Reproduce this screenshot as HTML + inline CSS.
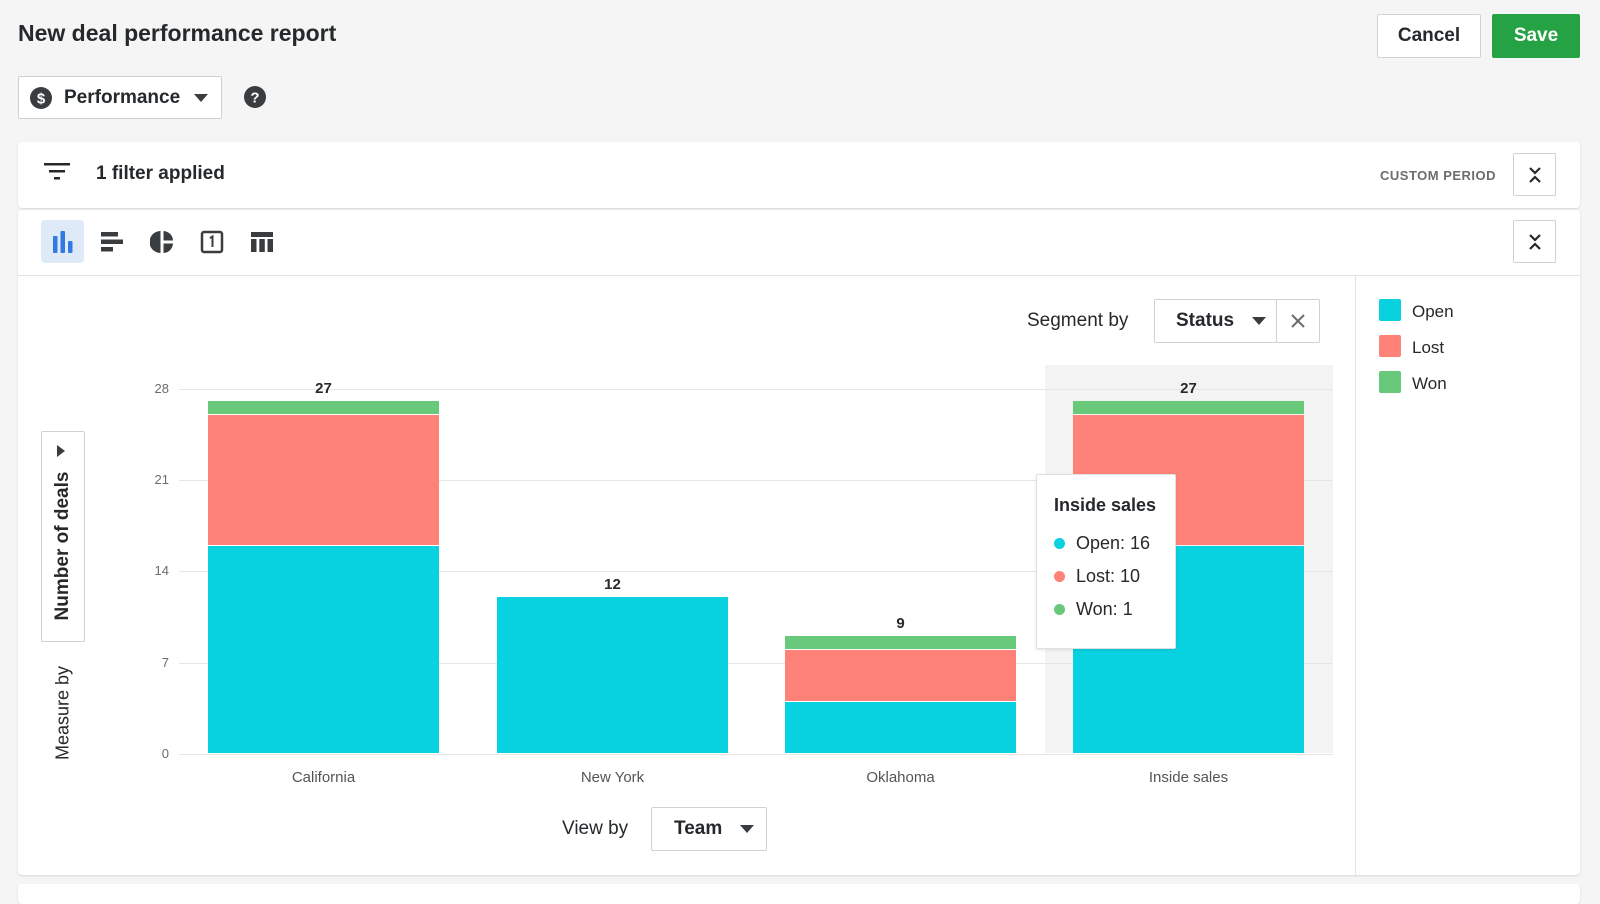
<!DOCTYPE html>
<html><head><meta charset="utf-8"><style>
*{box-sizing:border-box;margin:0;padding:0}
body{width:1600px;height:891px;background:#f5f5f5;font-family:"Liberation Sans",sans-serif;color:#26292c;position:relative;overflow:hidden}
.a{position:absolute}
.btn{position:absolute;background:#fff;border:1px solid #d0d1d3;border-radius:2px;display:flex;align-items:center;justify-content:center}
.panel{position:absolute;background:#fff;border-radius:4px;box-shadow:0 1px 2px rgba(0,0,0,.12)}
.gl{position:absolute;left:179px;width:1154px;height:1px;background:#e6e6e6}
.yl{position:absolute;width:30px;text-align:right;left:139px;font-size:13px;color:#6a6c6f}
.xl{position:absolute;top:769px;font-size:15px;color:#555;text-align:center;width:231px}
.cy{background:#08d1e0}.rd{background:#ff8279}.gr{background:#68c97b}
.vl{position:absolute;font-size:15px;font-weight:bold;text-align:center;width:231px}
</style></head><body>
<div class="a" style="left:18px;top:20px;font-size:23px;font-weight:bold;color:#26292c">New deal performance report</div>
<div class="btn" style="left:1377px;top:14px;width:104px;height:44px;font-size:19px;font-weight:bold">Cancel</div>
<div class="btn" style="left:1492px;top:14px;width:88px;height:44px;font-size:19px;font-weight:bold;color:#fff;background:#25a244;border-color:#25a244">Save</div>
<div class="btn" style="left:18px;top:76px;width:204px;height:43px;justify-content:flex-start;padding-left:11px;font-size:19px;font-weight:bold">
<svg width="22" height="22" viewBox="0 0 22 22"><circle cx="11" cy="11" r="11" fill="#3a3d40"/><text x="11" y="16.5" font-size="15" font-weight="bold" fill="#fff" text-anchor="middle" font-family="Liberation Sans">$</text></svg>
<span style="margin-left:12px">Performance</span>
<svg style="margin-left:14px" width="14" height="8"><path d="M0 0h14L7 8z" fill="#3a3d40"/></svg></div>
<svg class="a" style="left:244px;top:86px" width="22" height="22" viewBox="0 0 22 22"><circle cx="11" cy="11" r="11" fill="#3a3d40"/><text x="11" y="16.5" font-size="15" font-weight="bold" fill="#fff" text-anchor="middle" font-family="Liberation Sans">?</text></svg>

<div class="panel" style="left:18px;top:142px;width:1562px;height:66px"></div>
<svg class="a" style="left:44px;top:163px" width="26" height="18"><rect x="0" y="0" width="26" height="2.5" fill="#26292c"/><rect x="5" y="7" width="16" height="2.5" fill="#26292c"/><rect x="10" y="14" width="6" height="2.5" fill="#26292c"/></svg>
<div class="a" style="left:96px;top:163px;font-size:19px;font-weight:bold">1 filter applied</div>
<div class="a" style="left:1380px;top:168px;font-size:13px;font-weight:bold;color:#6a6c6f;letter-spacing:.5px">CUSTOM PERIOD</div>
<div class="btn" style="left:1513px;top:153px;width:43px;height:43px"><svg width="14" height="18"><path d="M2 2l5 5 5-5M2 16l5-5 5 5" stroke="#26292c" stroke-width="2.2" fill="none"/></svg></div>

<div class="panel" style="left:18px;top:210px;width:1562px;height:665px"></div>
<div class="a" style="left:18px;top:275px;width:1562px;height:1px;background:#e4e4e4"></div>
<div class="a" style="left:1355px;top:276px;width:1px;height:599px;background:#e4e4e4"></div>
<div class="btn" style="left:1513px;top:220px;width:43px;height:43px"><svg width="14" height="18"><path d="M2 2l5 5 5-5M2 16l5-5 5 5" stroke="#26292c" stroke-width="2.2" fill="none"/></svg></div>
<div class="a" style="left:41px;top:220px;width:43px;height:43px;background:#dfeaf9;border-radius:4px"></div>
<svg class="a" style="left:51px;top:230px" width="24" height="24"><rect x="2" y="6" width="4.5" height="17" rx="1" fill="#317ae2"/><rect x="9.5" y="1" width="4.5" height="22" rx="1" fill="#317ae2"/><rect x="17" y="11" width="4.5" height="12" rx="1" fill="#317ae2"/></svg>
<svg class="a" style="left:100px;top:230px" width="24" height="24"><rect x="1" y="2" width="17" height="4.5" fill="#3a3d40"/><rect x="1" y="9.5" width="22" height="4.5" fill="#3a3d40"/><rect x="1" y="17" width="12" height="4.5" fill="#3a3d40"/></svg>
<svg class="a" style="left:150px;top:230px" width="24" height="24"><path d="M10.5 1A11 11 0 0 0 10.5 23z" fill="#3a3d40"/><path d="M13.5 1A10 10 0 0 1 23 10.5H13.5z" fill="#3a3d40"/><path d="M13.5 13.5H23A10 10 0 0 1 13.5 23z" fill="#3a3d40"/></svg>
<svg class="a" style="left:200px;top:230px" width="24" height="24"><rect x="2" y="2" width="20" height="20" rx="2" fill="none" stroke="#3a3d40" stroke-width="2.5"/><path d="M10 8l2.5-1.5V17" stroke="#3a3d40" stroke-width="2" fill="none"/></svg>
<svg class="a" style="left:250px;top:230px" width="24" height="24"><rect x="1" y="2" width="22" height="5" fill="#3a3d40"/><rect x="1" y="9" width="5.5" height="13" fill="#3a3d40"/><rect x="9.3" y="9" width="5.5" height="13" fill="#3a3d40"/><rect x="17.5" y="9" width="5.5" height="13" fill="#3a3d40"/></svg>

<!-- legend -->
<div class="a cy" style="left:1379px;top:299px;width:22px;height:22px;border-radius:2px"></div>
<div class="a" style="left:1412px;top:302px;font-size:17px">Open</div>
<div class="a rd" style="left:1379px;top:335px;width:22px;height:22px;border-radius:2px"></div>
<div class="a" style="left:1412px;top:338px;font-size:17px">Lost</div>
<div class="a gr" style="left:1379px;top:371px;width:22px;height:22px;border-radius:2px"></div>
<div class="a" style="left:1412px;top:374px;font-size:17px">Won</div>

<!-- segment by -->
<div class="a" style="left:1027px;top:310px;font-size:19px">Segment by</div>
<div class="btn" style="left:1154px;top:299px;width:123px;height:44px;font-size:19px;font-weight:bold;justify-content:flex-start;padding-left:21px">Status<svg style="margin-left:18px" width="14" height="8"><path d="M0 0h14L7 8z" fill="#3a3d40"/></svg></div>
<div class="btn" style="left:1276px;top:299px;width:44px;height:44px"><svg width="16" height="16"><path d="M2 2l12 12M14 2L2 14" stroke="#6a6c6f" stroke-width="2"/></svg></div>

<!-- highlight -->
<div class="a" style="left:1045px;top:365px;width:288px;height:388px;background:#f3f3f3"></div>
<!-- grid -->
<div class="gl" style="top:389px"></div><div class="gl" style="top:480px"></div><div class="gl" style="top:571px"></div><div class="gl" style="top:663px"></div><div class="gl" style="top:754px"></div>
<div class="yl" style="top:381px">28</div><div class="yl" style="top:472px">21</div><div class="yl" style="top:563px">14</div><div class="yl" style="top:655px">7</div><div class="yl" style="top:746px">0</div>

<!-- bars -->
<div class="a gr" style="left:208px;top:401px;width:231px;height:13px"></div>
<div class="a rd" style="left:208px;top:415px;width:231px;height:130px"></div>
<div class="a cy" style="left:208px;top:546px;width:231px;height:207px"></div>
<div class="vl" style="left:208px;top:380px">27</div>
<div class="a cy" style="left:497px;top:597px;width:231px;height:156px"></div>
<div class="vl" style="left:497px;top:576px">12</div>
<div class="a gr" style="left:785px;top:636px;width:231px;height:13px"></div>
<div class="a rd" style="left:785px;top:650px;width:231px;height:51px"></div>
<div class="a cy" style="left:785px;top:702px;width:231px;height:51px"></div>
<div class="vl" style="left:785px;top:615px">9</div>
<div class="a gr" style="left:1073px;top:401px;width:231px;height:13px"></div>
<div class="a rd" style="left:1073px;top:415px;width:231px;height:130px"></div>
<div class="a cy" style="left:1073px;top:546px;width:231px;height:207px"></div>
<div class="vl" style="left:1073px;top:380px">27</div>

<div class="xl" style="left:208px">California</div>
<div class="xl" style="left:497px">New York</div>
<div class="xl" style="left:785px">Oklahoma</div>
<div class="xl" style="left:1073px">Inside sales</div>

<!-- tooltip -->
<div class="a" style="left:1036px;top:474px;width:140px;height:175px;background:#fff;border:1px solid #e0e0e0;border-radius:2px;box-shadow:0 1px 3px rgba(0,0,0,.1)">
<div class="a" style="left:17px;top:20px;font-size:18px;font-weight:bold;white-space:nowrap">Inside sales</div>
<div class="a cy" style="left:17px;top:63px;width:11px;height:11px;border-radius:50%"></div>
<div class="a" style="left:39px;top:58px;font-size:18px;white-space:nowrap">Open: 16</div>
<div class="a rd" style="left:17px;top:96px;width:11px;height:11px;border-radius:50%"></div>
<div class="a" style="left:39px;top:91px;font-size:18px;white-space:nowrap">Lost: 10</div>
<div class="a gr" style="left:17px;top:129px;width:11px;height:11px;border-radius:50%"></div>
<div class="a" style="left:39px;top:124px;font-size:18px;white-space:nowrap">Won: 1</div>
</div>

<!-- measure by -->
<div class="btn" style="left:41px;top:431px;width:44px;height:211px"></div>
<svg class="a" style="left:57px;top:445px" width="8" height="12"><path d="M0 0l8 6-8 6z" fill="#3a3d40"/></svg>
<div class="a" style="left:63px;top:546px;transform:translate(-50%,-50%) rotate(-90deg);font-size:19px;font-weight:bold;white-space:nowrap">Number of deals</div>
<div class="a" style="left:63px;top:713px;transform:translate(-50%,-50%) rotate(-90deg);font-size:18px;white-space:nowrap">Measure by</div>

<!-- view by -->
<div class="a" style="left:562px;top:818px;font-size:19px">View by</div>
<div class="btn" style="left:651px;top:807px;width:116px;height:44px;font-size:19px;font-weight:bold;justify-content:flex-start;padding-left:22px">Team<svg style="margin-left:18px" width="14" height="8"><path d="M0 0h14L7 8z" fill="#3a3d40"/></svg></div>

<div class="panel" style="left:18px;top:884px;width:1562px;height:20px"></div>
</body></html>
